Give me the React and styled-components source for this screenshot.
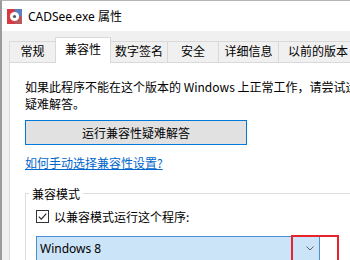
import React from 'react';
import styled, { createGlobalStyle } from 'styled-components';

const GlobalStyle = createGlobalStyle`
    body {
        margin: 0;
        background: #ffffff;
        overflow: hidden;
    }
`;

const Window = styled.div`
    box-sizing: border-box;
    width: 420px;
    height: 300px;
    border-top: 1px solid #b4b4b4;
    border-left: 2px solid #9b9b9b;
    background-color: #f0f0f0;
    font-family: "Noto Sans CJK SC", "Noto Sans", sans-serif;
    font-size: 12px;
    color: #000;
`;

const TitleBar = styled.div`
    display: flex;
    align-items: center;
    gap: 6px;
    height: 30px;
    padding-left: 5px;
    background-color: #ffffff;
`;

const Title = styled.span`
    font-family: "Noto Sans", "Noto Sans CJK SC", sans-serif;
    font-size: 12px;
`;

const Body = styled.div`
    padding: 6px 0 0 7px;
`;

const TabRow = styled.div`
    display: flex;
    align-items: flex-end;
    height: 25px;
`;

const Tab = styled.div`
    box-sizing: border-box;
    flex: none;
    width: ${p => p.w}px;
    height: ${p => (p.active ? 26 : 21)}px;
    margin-left: ${p => (p.first ? 0 : -1)}px;
    margin-bottom: ${p => (p.active ? -1 : 0)}px;
    padding-top: ${p => (p.active ? 2 : 0)}px;
    border: 1px solid #d9d9d9;
    border-bottom: none;
    background-color: ${p => (p.active ? '#ffffff' : '#f0f0f0')};
    text-align: center;
    line-height: 17px;
    white-space: nowrap;
    position: relative;
    z-index: ${p => (p.active ? 1 : 0)};
`;

const Panel = styled.div`
    height: 240px;
    padding: 15px 0 0 15px;
    border: 1px solid #d9d9d9;
    background-color: #ffffff;
`;

const Intro = styled.p`
    margin: 0;
    line-height: 17px;
    white-space: nowrap;
`;

const FixButton = styled.div`
    box-sizing: border-box;
    width: 222px;
    height: 25px;
    margin-top: 8px;
    border: 1px solid #0078d7;
    background-color: #e1e1e1;
    display: flex;
    align-items: center;
    justify-content: center;
`;

const HelpLink = styled.a`
    display: inline-block;
    margin-top: 9px;
    line-height: 17px;
    color: #0066cc;
    text-decoration: underline;
`;

const Group = styled.fieldset`
    width: 400px;
    margin: 14px 0 0 0;
    padding: 6px 0 10px 10px;
    border: 1px solid #dcdcdc;
`;

const GroupTitle = styled.legend`
    margin-left: -7px;
    padding: 0 3px;
    line-height: 17px;
`;

const CheckRow = styled.div`
    display: flex;
    align-items: center;
    gap: 5px;
    height: 17px;
`;

const CheckBox = styled.span`
    box-sizing: border-box;
    width: 13px;
    height: 13px;
    border: 1px solid #333333;
    background: #ffffff;
    display: flex;
`;

const Select = styled.div`
    box-sizing: border-box;
    position: relative;
    width: 284px;
    height: 25px;
    margin-top: 11px;
    padding: 0 5px 0 3px;
    border: 1px solid #4a90d9;
    background-color: #cce4f7;
    display: flex;
    align-items: center;
    justify-content: space-between;
    font-family: "Noto Sans", "Noto Sans CJK SC", sans-serif;
`;

const Highlight = styled.span`
    position: absolute;
    left: 254px;
    top: -2px;
    width: 48px;
    height: 32px;
    box-sizing: border-box;
    border: 2px solid #e8232b;
`;

const AppIcon = () => (
    <svg width="15" height="15" viewBox="0 0 15 15">
        <rect x="0" y="0" width="15" height="15" fill="#d8383f" />
        <path d="M7.5 0 H15 V7.5 H7.5 Z" fill="#5b7fbf" />
        <path d="M7.5 7.5 H15 V15 H7.5 Z" fill="#b9585c" />
        <circle cx="7.5" cy="7.5" r="4.6" fill="#ffffff" />
        <circle cx="7.5" cy="7.5" r="1.6" fill="#555555" />
    </svg>
);

const tabs = [
    { label: '常规', w: 47 },
    { label: '兼容性', w: 56, active: true },
    { label: '数字签名', w: 58 },
    { label: '安全', w: 52 },
    { label: '详细信息', w: 61 },
    { label: '以前的版本', w: 80 },
];

const App = () => {
    return (
        <Window>
            <GlobalStyle />
            <TitleBar>
                <AppIcon />
                <Title>CADSee.exe 属性</Title>
            </TitleBar>
            <Body>
                <TabRow>
                    {tabs.map((t, i) => (
                        <Tab key={t.label} w={t.w} active={t.active} first={i === 0}>
                            {t.label}
                        </Tab>
                    ))}
                </TabRow>
                <Panel>
                    <Intro>
                        如果此程序不能在这个版本的 Windows 上正常工作，请尝试运行兼容性
                        <br />
                        疑难解答。
                    </Intro>
                    <FixButton>运行兼容性疑难解答</FixButton>
                    <HelpLink href="#">如何手动选择兼容性设置?</HelpLink>
                    <Group>
                        <GroupTitle>兼容模式</GroupTitle>
                        <CheckRow>
                            <CheckBox>
                                <svg width="11" height="11" viewBox="0 0 11 11">
                                    <polyline points="1.8,5.6 4.3,8.1 9.3,2.6" fill="none" stroke="#222" strokeWidth="1.1" />
                                </svg>
                            </CheckBox>
                            以兼容模式运行这个程序:
                        </CheckRow>
                        <Select>
                            <span>Windows 8</span>
                            <svg width="8" height="5" viewBox="0 0 8 5">
                                <polyline points="0.5,0.5 4,4 7.5,0.5" fill="none" stroke="#606060" strokeWidth="1" />
                            </svg>
                            <Highlight />
                        </Select>
                    </Group>
                </Panel>
            </Body>
        </Window>
    );
};

export default App;
